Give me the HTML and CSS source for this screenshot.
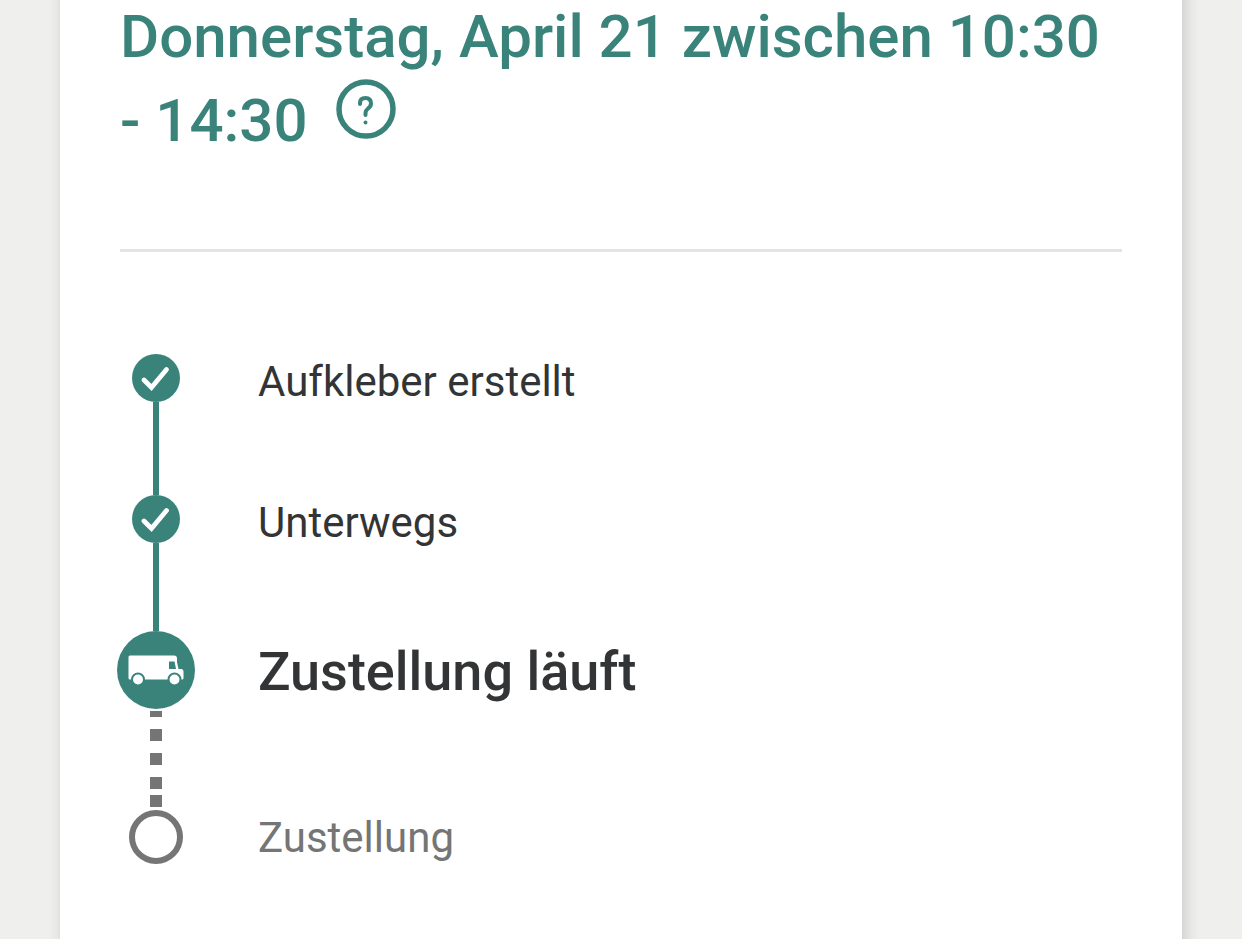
FILE: index.html
```
<!DOCTYPE html>
<html lang="de">
<head>
  <meta charset="UTF-8" />
  <meta name="viewport" content="width=device-width, initial-scale=1.0"/>
  <title>Sendungsverfolgung</title>
  <link rel="stylesheet" href="styles.css">
</head>
<body>

<main class="tracking-card">
  <!-- Delivery window -->
  <h1 class="delivery-time">
    Donnerstag, April 21 zwischen 10:30 - 14:30
    <button class="help-btn" type="button" aria-label="Hilfe">
      <svg width="60" height="60" viewBox="0 0 60 60" fill="none" stroke="#3a837b" aria-hidden="true">
        <circle cx="30" cy="30" r="27" stroke-width="5.500"/>
        <path d="M24 25V24Q24 19 29.500 19Q35 19 35 24.500Q35 27.500 32 29.500Q29.500 31.500 29.500 34V36" stroke-width="4" stroke-linecap="round"/>
        <circle cx="29.500" cy="43.500" r="1" stroke-width="2"/>
      </svg>
    </button>
  </h1>

  <hr class="divider">

  <!-- Progress -->
  <ol class="steps">
    <li class="step done">
      <div class="step-marker">
        <svg class="step-icon" width="48" height="48" viewBox="0 0 48 48" aria-hidden="true">
          <circle cx="24" cy="24" r="24" fill="#3a837b"/>
          <path d="M12 26L19.500 33.500L34.500 15.500" fill="none" stroke="#fff" stroke-width="4.800" stroke-linecap="round"/>
        </svg>
        <span class="step-line"></span>
      </div>
      <span class="step-label">Aufkleber erstellt</span>
    </li>
    <li class="step done second">
      <div class="step-marker">
        <svg class="step-icon" width="48" height="48" viewBox="0 0 48 48" aria-hidden="true">
          <circle cx="24" cy="24" r="24" fill="#3a837b"/>
          <path d="M12 26L19.500 33.500L34.500 15.500" fill="none" stroke="#fff" stroke-width="4.800" stroke-linecap="round"/>
        </svg>
        <span class="step-line"></span>
      </div>
      <span class="step-label">Unterwegs</span>
    </li>
    <li class="step current" aria-current="step">
      <div class="step-marker">
        <svg class="step-icon" width="78" height="78" viewBox="0 0 78 78" aria-hidden="true">
          <circle cx="39" cy="39" r="39" fill="#3a837b"/>
          <path d="M13 24.500H57Q60 24.500 60 27.500V31L61.500 38H64.500Q66.500 38 66.500 40.500V47Q66.500 48.500 65 48.500H13Q11.500 48.500 11.500 47V26Q11.500 24.500 13 24.500Z" fill="#fff"/>
          <path d="M52 30.500H57.500L59 38H52Z" fill="#3a837b"/>
          <g fill="#fff" stroke="#3a837b" stroke-width="2">
            <circle cx="21" cy="48.500" r="6"/>
            <circle cx="57.500" cy="48.500" r="6"/>
          </g>
        </svg>
        <span class="step-dots"></span>
      </div>
      <span class="step-label">Zustellung läuft</span>
    </li>
    <li class="step upcoming">
      <div class="step-marker">
        <span class="step-ring"></span>
      </div>
      <span class="step-label">Zustellung</span>
    </li>
  </ol>
</main>

</body>
</html>
```
FILE: styles.css
```
/* Base Reset */
* { margin: 0; padding: 0; box-sizing: border-box; }

body {
  display: flex;
  min-height: 100vh;
  padding: 0 60px;
  background: #efefed;
  color: #333435;
  font-family: Roboto, Arial, sans-serif;
}

/* Card */
.tracking-card {
  flex: 1;
  margin-top: -25px;
  padding: 20px 60px 100px;
  background: #fff;
  box-shadow: 3px 0 14px rgba(0,0,0,0.16);
}

.delivery-time {
  color: #3a837b;
  font-size: 60px;
  font-weight: 500;
  line-height: 84px;
}

.help-btn {
  width: 60px;
  height: 60px;
  margin-left: 14px;
  background: none;
  border: none;
  border-radius: 50%;
  vertical-align: top;
  cursor: pointer;
}

.help-btn svg { display: block; }

.divider {
  height: 3px;
  margin: 86px 0 102px;
  background: #e4e4e4;
  border: none;
}

/* Steps */
.steps {
  margin-left: -3px;
  list-style: none;
}

.step {
  display: flex;
  gap: 63px;
  min-height: 141px;
}

.step.second { min-height: 136px; }
.step.current { min-height: 179px; }
.step.upcoming { min-height: 54px; }

.step-marker {
  display: flex;
  flex-direction: column;
  align-items: center;
  width: 78px;
}

.step-icon {
  display: block;
  flex-shrink: 0;
}

.step-line {
  flex: 1;
  width: 6px;
  background: #3a837b;
}

/* Dotted line, the last dot always sits right above the ring */
.step-dots {
  flex: 1;
  width: 12px;
  margin: 2px 0 3px;
  background:
    linear-gradient(#757575, #757575) bottom / 12px 12px no-repeat,
    repeating-linear-gradient(#757575 0 6px, transparent 6px 18px, #757575 18px 24px) top / 12px 78px no-repeat;
}

.step-ring {
  width: 54px;
  height: 54px;
  border: 6px solid #757575;
  border-radius: 50%;
}

.step-label {
  font-size: 42px;
  line-height: 56px;
}

.current .step-label {
  font-size: 54px;
  font-weight: 500;
  line-height: 82px;
}

.upcoming .step-label { color: #757575; }
```
